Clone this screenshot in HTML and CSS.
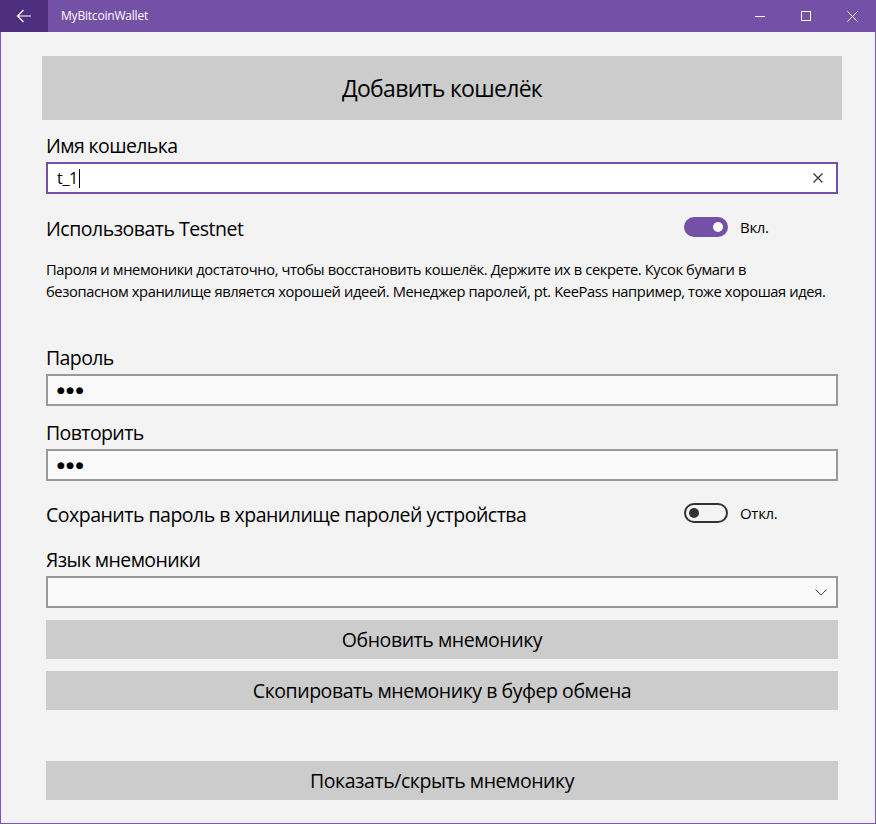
FILE: index.html
```html
<!DOCTYPE html>
<html lang="ru">
<head>
<meta charset="utf-8">
<title>MyBitcoinWallet</title>
<link rel="stylesheet" href="styles.css">
</head>
<body>
<div class="window">
  <header class="titlebar">
    <div class="back">
      <svg width="16" height="14" viewBox="0 0 16 14"><path d="M15 7H1.5M7.5 1L1.5 7l6 6" fill="none" stroke="#fff" stroke-width="1.2"/></svg>
    </div>
    <div class="title">MyBitcoinWallet</div>
    <div class="controls">
      <div class="ctl"><svg width="10" height="10" viewBox="0 0 10 10"><path d="M0 5.5h10" stroke="#fff" stroke-width="1"/></svg></div>
      <div class="ctl"><svg width="10" height="10" viewBox="0 0 10 10"><rect x="0.5" y="0.5" width="9" height="9" fill="none" stroke="#fff" stroke-width="1"/></svg></div>
      <div class="ctl"><svg width="11" height="11" viewBox="0 0 11 11"><path d="M0.5 0.5l10 10M10.5 0.5l-10 10" stroke="#fff" stroke-width="1"/></svg></div>
    </div>
  </header>
  <main class="content">
    <div class="add-btn">Добавить кошелёк</div>
    <div class="form">
      <div class="label first">Имя кошелька</div>
      <div class="field focused">
        <span class="value">t_1</span><span class="caret"></span>
        <svg class="clear" width="10" height="10" viewBox="0 0 10 10"><path d="M0.5 0.5l9 9M9.5 0.5l-9 9" stroke="#333" stroke-width="1.2"/></svg>
      </div>
      <div class="switch-row testnet">
        <span class="switch-text">Использовать Testnet</span>
        <div class="switch">
          <span class="toggle on"><span class="knob"></span></span>
          <span class="state">Вкл.</span>
        </div>
      </div>
      <p class="info">Пароля и мнемоники достаточно, чтобы восстановить кошелёк. Держите их в секрете. Кусок бумаги в<br>безопасном хранилище является хорошей идеей. Менеджер паролей, pt. KeePass например, тоже хорошая идея.</p>
      <div class="label pass">Пароль</div>
      <div class="field"><span class="dots">●●●</span></div>
      <div class="label">Повторить</div>
      <div class="field"><span class="dots">●●●</span></div>
      <div class="switch-row save">
        <span class="switch-text">Сохранить пароль в хранилище паролей устройства</span>
        <div class="switch">
          <span class="toggle off"><span class="knob"></span></span>
          <span class="state">Откл.</span>
        </div>
      </div>
      <div class="label">Язык мнемоники</div>
      <div class="field combo">
        <svg class="chevron" width="12" height="7" viewBox="0 0 12 7"><path d="M0.5 0.5l5.5 5.5 5.5-5.5" fill="none" stroke="#555" stroke-width="1"/></svg>
      </div>
      <div class="btn">Обновить мнемонику</div>
      <div class="btn">Скопировать мнемонику в буфер обмена</div>
      <div class="btn gap">Показать/скрыть мнемонику</div>
    </div>
  </main>
</div>
</body>
</html>
```
FILE: styles.css
```css
* { box-sizing: border-box; }
html, body { margin: 0; padding: 0; }
body {
  width: 876px;
  height: 824px;
  overflow: hidden;
  font-family: "Open Sans", "Noto Sans", sans-serif;
  color: #000;
  background: #f3f3f3;
}
.window { width: 876px; height: 824px; display: flex; flex-direction: column; }
.titlebar {
  height: 32px;
  background: #7450a6;
  display: flex;
  align-items: stretch;
  color: #fff;
}
.back {
  width: 48px;
  background: #4d2f7d;
  display: flex;
  align-items: center;
  justify-content: center;
}
.title {
  margin-left: 13px;
  font-size: 12px;
  letter-spacing: -0.2px;
  line-height: 32px;
  flex: 1;
}
.controls { display: flex; padding-right: 1px; }
.ctl { width: 46px; display: flex; align-items: center; justify-content: center; }
.content {
  flex: 1;
  border: 1px solid #7b57b1;
  border-top: 0;
  padding: 24px 0 0 41px;
  background: #f3f3f3;
}
.add-btn {
  width: 800px;
  height: 64px;
  background: #cccccc;
  font-size: 23px;
  letter-spacing: -0.7px;
  display: flex;
  align-items: center;
  justify-content: center;
}
.form { margin-left: 4px; width: 792px; display: flex; flex-direction: column; }
.label { font-size: 19.5px; letter-spacing: -0.6px; line-height: 27px; margin: 13px 0 3px; }
.label.first { margin-top: 12px; }
.label.pass { margin-top: 42px; }
.field {
  height: 32px;
  border: 2px solid #999;
  background: #fafafa;
  display: flex;
  align-items: center;
  padding: 0 9px;
}
.field.focused { border-color: #7450a6; background: #fff; }
.value { font-size: 16px; letter-spacing: -0.3px; }
.caret { width: 1px; height: 19px; background: #000; margin-left: 1px; }
.clear { margin-left: auto; margin-right: 4px; }
.dots { font-family: "DejaVu Sans", sans-serif; font-size: 9px; letter-spacing: 1.5px; }
.combo { justify-content: flex-end; padding-right: 9px; }
.switch-row { display: grid; grid-template-columns: 638px auto; align-items: start; }
.switch-row.testnet { margin-top: 21px; }
.switch-row.save { margin-top: 20px; margin-bottom: 5px; }
.switch-text { font-size: 19.5px; letter-spacing: -0.5px; line-height: 27px; }
.switch { display: flex; align-items: center; margin-top: 2px; }
.toggle {
  width: 44px;
  height: 20px;
  border-radius: 10px;
  display: flex;
  align-items: center;
  padding: 0 5px;
}
.toggle.on { background: #7450a6; justify-content: flex-end; }
.toggle.off { border: 2px solid #333; padding: 0 3px; }
.knob { width: 10px; height: 10px; border-radius: 50%; }
.toggle.on .knob { background: #fff; }
.toggle.off .knob { background: #333; }
.state { font-size: 15px; letter-spacing: -0.3px; margin-left: 12px; }
.info { font-size: 14.7px; letter-spacing: -0.38px; line-height: 22px; margin: 16px 0 0; }
.btn {
  height: 39px;
  background: #cccccc;
  font-size: 19.5px;
  letter-spacing: -0.45px;
  display: flex;
  align-items: center;
  justify-content: center;
  margin-top: 12px;
}
.btn.gap { margin-top: 51px; }
```
